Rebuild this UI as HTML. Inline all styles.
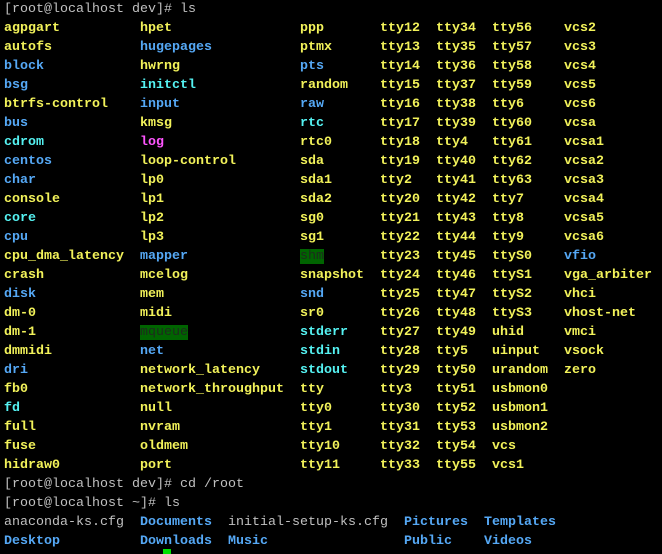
<!DOCTYPE html>
<html><head><meta charset="utf-8"><style>
body{margin:0;background:#000;width:662px;height:554px;overflow:hidden}
#t{position:absolute;left:4px;top:0;font-family:"Liberation Mono",monospace;font-size:13.33px;line-height:19px;color:#c0c0c0}
.r{height:19px;white-space:pre}
i{font-style:normal;display:inline-block;font-weight:bold}
.a{width:136px}.b{width:160px}.c{width:80px}.d{width:56px}.e{width:56px}.f{width:72px}
.y{color:#f2f25a}.u{color:#55a8f5}.k{color:#55f2f2}.m{color:#ff55ff}
.g span{background:#006400;color:#1e2a1e;font-weight:normal}
.p{font-weight:normal;color:#c0c0c0}
#cur{position:absolute;left:163px;top:549px;width:8px;height:5px;background:#00e000}
</style></head><body><div id="t"><div class="r">[root@localhost dev]# ls</div><div class="r"><i class="a y">agpgart</i><i class="b y">hpet</i><i class="c y">ppp</i><i class="d y">tty12</i><i class="e y">tty34</i><i class="f y">tty56</i><i class="y">vcs2</i></div><div class="r"><i class="a y">autofs</i><i class="b u">hugepages</i><i class="c y">ptmx</i><i class="d y">tty13</i><i class="e y">tty35</i><i class="f y">tty57</i><i class="y">vcs3</i></div><div class="r"><i class="a u">block</i><i class="b y">hwrng</i><i class="c u">pts</i><i class="d y">tty14</i><i class="e y">tty36</i><i class="f y">tty58</i><i class="y">vcs4</i></div><div class="r"><i class="a u">bsg</i><i class="b k">initctl</i><i class="c y">random</i><i class="d y">tty15</i><i class="e y">tty37</i><i class="f y">tty59</i><i class="y">vcs5</i></div><div class="r"><i class="a y">btrfs-control</i><i class="b u">input</i><i class="c u">raw</i><i class="d y">tty16</i><i class="e y">tty38</i><i class="f y">tty6</i><i class="y">vcs6</i></div><div class="r"><i class="a u">bus</i><i class="b y">kmsg</i><i class="c k">rtc</i><i class="d y">tty17</i><i class="e y">tty39</i><i class="f y">tty60</i><i class="y">vcsa</i></div><div class="r"><i class="a k">cdrom</i><i class="b m">log</i><i class="c y">rtc0</i><i class="d y">tty18</i><i class="e y">tty4</i><i class="f y">tty61</i><i class="y">vcsa1</i></div><div class="r"><i class="a u">centos</i><i class="b y">loop-control</i><i class="c y">sda</i><i class="d y">tty19</i><i class="e y">tty40</i><i class="f y">tty62</i><i class="y">vcsa2</i></div><div class="r"><i class="a u">char</i><i class="b y">lp0</i><i class="c y">sda1</i><i class="d y">tty2</i><i class="e y">tty41</i><i class="f y">tty63</i><i class="y">vcsa3</i></div><div class="r"><i class="a y">console</i><i class="b y">lp1</i><i class="c y">sda2</i><i class="d y">tty20</i><i class="e y">tty42</i><i class="f y">tty7</i><i class="y">vcsa4</i></div><div class="r"><i class="a k">core</i><i class="b y">lp2</i><i class="c y">sg0</i><i class="d y">tty21</i><i class="e y">tty43</i><i class="f y">tty8</i><i class="y">vcsa5</i></div><div class="r"><i class="a u">cpu</i><i class="b y">lp3</i><i class="c y">sg1</i><i class="d y">tty22</i><i class="e y">tty44</i><i class="f y">tty9</i><i class="y">vcsa6</i></div><div class="r"><i class="a y">cpu_dma_latency</i><i class="b u">mapper</i><i class="c g"><span>shm</span></i><i class="d y">tty23</i><i class="e y">tty45</i><i class="f y">ttyS0</i><i class="u">vfio</i></div><div class="r"><i class="a y">crash</i><i class="b y">mcelog</i><i class="c y">snapshot</i><i class="d y">tty24</i><i class="e y">tty46</i><i class="f y">ttyS1</i><i class="y">vga_arbiter</i></div><div class="r"><i class="a u">disk</i><i class="b y">mem</i><i class="c u">snd</i><i class="d y">tty25</i><i class="e y">tty47</i><i class="f y">ttyS2</i><i class="y">vhci</i></div><div class="r"><i class="a y">dm-0</i><i class="b y">midi</i><i class="c y">sr0</i><i class="d y">tty26</i><i class="e y">tty48</i><i class="f y">ttyS3</i><i class="y">vhost-net</i></div><div class="r"><i class="a y">dm-1</i><i class="b g"><span>mqueue</span></i><i class="c k">stderr</i><i class="d y">tty27</i><i class="e y">tty49</i><i class="f y">uhid</i><i class="y">vmci</i></div><div class="r"><i class="a y">dmmidi</i><i class="b u">net</i><i class="c k">stdin</i><i class="d y">tty28</i><i class="e y">tty5</i><i class="f y">uinput</i><i class="y">vsock</i></div><div class="r"><i class="a u">dri</i><i class="b y">network_latency</i><i class="c k">stdout</i><i class="d y">tty29</i><i class="e y">tty50</i><i class="f y">urandom</i><i class="y">zero</i></div><div class="r"><i class="a y">fb0</i><i class="b y">network_throughput</i><i class="c y">tty</i><i class="d y">tty3</i><i class="e y">tty51</i><i class="f y">usbmon0</i></div><div class="r"><i class="a k">fd</i><i class="b y">null</i><i class="c y">tty0</i><i class="d y">tty30</i><i class="e y">tty52</i><i class="f y">usbmon1</i></div><div class="r"><i class="a y">full</i><i class="b y">nvram</i><i class="c y">tty1</i><i class="d y">tty31</i><i class="e y">tty53</i><i class="f y">usbmon2</i></div><div class="r"><i class="a y">fuse</i><i class="b y">oldmem</i><i class="c y">tty10</i><i class="d y">tty32</i><i class="e y">tty54</i><i class="f y">vcs</i></div><div class="r"><i class="a y">hidraw0</i><i class="b y">port</i><i class="c y">tty11</i><i class="d y">tty33</i><i class="e y">tty55</i><i class="f y">vcs1</i></div><div class="r">[root@localhost dev]# cd /root</div><div class="r">[root@localhost ~]# ls</div><div class="r"><i class="a p">anaconda-ks.cfg</i><i class="u" style="width:88px">Documents</i><i class="p" style="width:176px">initial-setup-ks.cfg</i><i class="u" style="width:80px">Pictures</i><i class="u">Templates</i></div><div class="r"><i class="a u">Desktop</i><i class="u" style="width:88px">Downloads</i><i class="u" style="width:176px">Music</i><i class="u" style="width:80px">Public</i><i class="u">Videos</i></div></div><div id="cur"></div></body></html>
